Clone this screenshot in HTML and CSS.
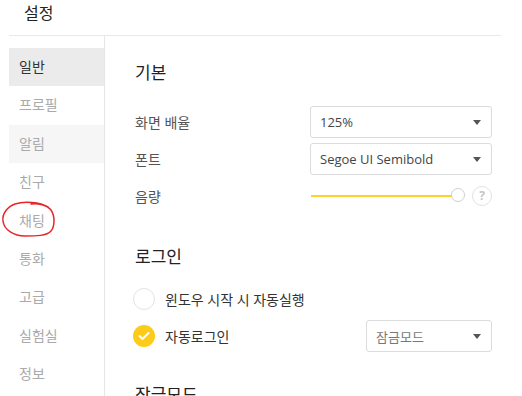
FILE: index.html
```html
<!DOCTYPE html>
<html lang="ko">
<head>
  <meta charset="UTF-8" />
  <title>설정</title>
  <link rel="stylesheet" href="styles.css">
</head>
<body>
  <header class="top">
    <h1>설정</h1>
  </header>

  <div class="main">
    <nav class="side">
      <ul>
        <li class="active">일반</li>
        <li>프로필</li>
        <li class="hover">알림</li>
        <li>친구</li>
        <li>채팅</li>
        <li>통화</li>
        <li>고급</li>
        <li>실험실</li>
        <li>정보</li>
      </ul>
    </nav>

    <div class="content">
      <section class="group">
        <h2>기본</h2>
        <div class="row">
          <span class="label">화면 배율</span>
          <div class="select"><span>125%</span><i class="caret"></i></div>
        </div>
        <div class="row">
          <span class="label">폰트</span>
          <div class="select"><span>Segoe UI Semibold</span><i class="caret"></i></div>
        </div>
        <div class="row">
          <span class="label">음량</span>
          <div class="slider">
            <div class="track"><span class="knob"></span></div>
            <span class="help">?</span>
          </div>
        </div>
      </section>

      <section class="group">
        <h2>로그인</h2>
        <div class="row">
          <span class="check"></span>
          <span class="check-label">윈도우 시작 시 자동실행</span>
        </div>
        <div class="row">
          <span class="check on">
            <svg width="12" height="10" viewBox="0 0 12 10"><path d="M1.5 5l3 3 6-6" fill="none" stroke="#fff" stroke-width="2" stroke-linecap="round" stroke-linejoin="round"/></svg>
          </span>
          <span class="check-label wide">자동로그인</span>
          <div class="select small"><span>잠금모드</span><i class="caret"></i></div>
        </div>
      </section>

      <section class="group">
        <h2>잠금모드</h2>
      </section>
    </div>
  </div>

  <!-- red pen mark drawn over the 채팅 item -->
  <svg class="mark" width="60" height="40" viewBox="0 0 60 40">
    <path d="M48 8 C40 3 24 2 15 5 C7 8 2 15 3 22 C4 31 14 37 25 37 C35 37 47 37 51 32 C55 27 55 17 51 11 C47 6 38 4 31 5" fill="none" stroke="#e8262a" stroke-width="1.5" stroke-linecap="round"/>
  </svg>
</body>
</html>
```

FILE: styles.css
```css
body {
  margin: 0;
  background: #fff;
  font-family: "Open Sans", "Noto Sans CJK KR", sans-serif;
  color: #333;
  height: 396px;
  overflow: hidden;
  position: relative;
}

.top {
  height: 35px;
  margin: 0 21px 0 9px;
  border-bottom: 1px solid #e9e9e9;
}

.top h1 {
  margin: 0;
  padding-left: 15px;
  font-size: 16px;
  font-weight: 400;
  line-height: 27px;
  color: #222;
}

.main {
  display: flex;
  margin-left: 9px;
  height: 360px;
}

.side {
  width: 95px;
  border-right: 1px solid #e6e6e6;
  padding-top: 12px;
}

.side ul {
  list-style: none;
  margin: 0;
  padding: 0;
}

.side li {
  height: 38.4px;
  line-height: 38px;
  padding-left: 10px;
  font-size: 14px;
  color: #aaa;
}

.side li.active {
  background: #ebebeb;
  color: #333;
}

.side li.hover {
  background: #f6f6f6;
}

.content {
  flex: 1;
  padding-left: 30px;
}

.group h2 {
  margin: 0;
  font-size: 17px;
  font-weight: 400;
  line-height: 24px;
  color: #222;
}

.group:nth-child(1) {
  padding-top: 25px;
}

.group:nth-child(1) h2 {
  margin-bottom: 21px;
}

.group:nth-child(2) {
  padding-top: 28px;
}

.group:nth-child(2) h2 {
  margin-bottom: 14px;
}

.group:nth-child(3) {
  padding-top: 26px;
}

.row {
  display: flex;
  align-items: center;
  height: 32px;
  margin-bottom: 5px;
  font-size: 14px;
}

.label {
  width: 175px;
  color: #555;
}

.select {
  box-sizing: border-box;
  width: 182px;
  height: 32px;
  border: 1px solid #dcdcdc;
  border-radius: 3px;
  display: flex;
  align-items: center;
  justify-content: space-between;
  padding: 0 10px 0 9px;
  font-size: 13px;
  color: #444;
}

.select.small {
  width: 126px;
  color: #777;
}

.caret {
  width: 0;
  height: 0;
  border-left: 4px solid transparent;
  border-right: 4px solid transparent;
  border-top: 5px solid #555;
}

.slider {
  width: 182px;
  display: flex;
  align-items: center;
  gap: 13px;
}

.track {
  position: relative;
  flex: 1;
  height: 2px;
  background: #fdd22b;
  margin-left: 1px;
}

.knob {
  position: absolute;
  right: -6px;
  top: -7px;
  width: 14px;
  height: 14px;
  box-sizing: border-box;
  border: 1px solid #cfcfcf;
  border-radius: 50%;
  background: #fff;
}

.help {
  width: 20px;
  height: 20px;
  box-sizing: border-box;
  border: 1px solid #e2e2e2;
  border-radius: 50%;
  font-size: 12px;
  font-weight: 700;
  color: #c4c4c4;
  text-align: center;
  line-height: 18px;
}

.check {
  box-sizing: border-box;
  width: 22px;
  height: 22px;
  margin-left: -2px;
  border: 1px solid #e3e3e3;
  border-radius: 50%;
  display: flex;
  align-items: center;
  justify-content: center;
}

.check.on {
  border: none;
  background: #fdcb1a;
}

.check-label {
  margin-left: 10px;
  color: #333;
}

.check-label.wide {
  width: 201px;
}

.mark {
  position: absolute;
  left: 0;
  top: 199px;
}
```
